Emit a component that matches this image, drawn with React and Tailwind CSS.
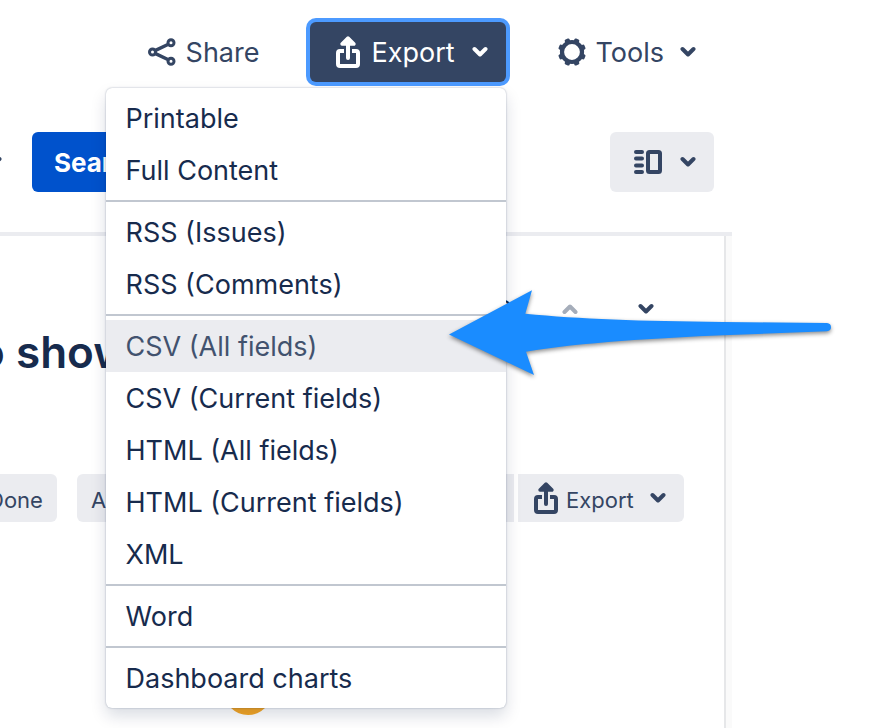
import React, { useState } from 'react';

const menuSections = [
  ['Printable', 'Full Content'],
  ['RSS (Issues)', 'RSS (Comments)'],
  ['CSV (All fields)', 'CSV (Current fields)', 'HTML (All fields)', 'HTML (Current fields)', 'XML'],
  ['Word'],
  ['Dashboard charts'],
];

const Chevron = ({ up = false }) => (
  <svg width="16" height="12" viewBox="0 0 16 12" fill="none" stroke="currentColor" strokeWidth="4" strokeLinecap="round" strokeLinejoin="round" className="shrink-0" aria-hidden="true">
    <path d={up ? 'M2.5 9 8 3.5 13.5 9' : 'M2.5 3 8 8.5 13.5 3'} />
  </svg>
);

const ShareIcon = () => (
  <svg width="28" height="28" viewBox="0 0 28 28" fill="none" stroke="currentColor" strokeWidth="3" className="shrink-0" aria-hidden="true">
    <circle cx="4.5" cy="14" r="3" />
    <circle cx="23" cy="4.8" r="3" />
    <circle cx="23" cy="23.2" r="3" />
    <path d="M7 12.6 20.4 6.2M7 15.4l13.4 6.4" strokeWidth="3.4" />
  </svg>
);

const ExportIcon = () => (
  <svg width="28" height="36" viewBox="0 0 28 36" fill="none" stroke="currentColor" strokeWidth="4" className="shrink-0" aria-hidden="true">
    <path d="M10 17H6a2 2 0 0 0-2 2v11a2 2 0 0 0 2 2h16a2 2 0 0 0 2-2V19a2 2 0 0 0-2-2h-4" />
    <path d="M14 6v18" strokeLinecap="round" />
    <path d="M8 10 14 4l6 6Z" fill="currentColor" strokeWidth="3.4" strokeLinecap="round" strokeLinejoin="round" />
  </svg>
);

const GearIcon = () => (
  <svg width="28" height="28" viewBox="0 0 28 28" className="shrink-0" aria-hidden="true">
    <circle cx="14" cy="14" r="10" fill="none" stroke="currentColor" strokeWidth="4.2" />
    {[22.5, 67.5, 112.5, 157.5, 202.5, 247.5, 292.5, 337.5].map(angle => (
      <rect key={angle} x="11.4" y="0" width="5.2" height="5" rx="1.4" fill="currentColor" transform={`rotate(${angle} 14 14)`} />
    ))}
  </svg>
);

const DetailViewIcon = () => (
  <svg width="28" height="24" viewBox="0 0 28 24" fill="none" stroke="currentColor" className="shrink-0" aria-hidden="true">
    <path d="M2 2H8M2 8.5H8M2 15.5H8M2 22H8" strokeWidth="4" strokeLinecap="round" />
    <rect x="14" y="2" width="12" height="20" rx="1.5" strokeWidth="4" />
  </svg>
);

const Arrow = () => (
  <svg width="400" height="100" viewBox="0 0 400 100" className="pointer-events-none absolute left-[440px] top-[280px] z-20 drop-shadow-[0_2px_2px_rgba(0,0,0,0.45)]" aria-hidden="true">
    <path
      d="M9 54.5 92 10.3 85.3 33.7C140 39 200 41 283 42L387 43Q391 43.5 391 47.3 391 51 387 51.2L283 55.3C220 58 140 62.5 86 71.7L94 95Z"
      fill="#1a8cff"
    />
  </svg>
);

const ExportMenu = () => {
  const [active, setActive] = useState('CSV (All fields)');

  return (
    <div role="menu" className="absolute right-0 top-full z-10 mt-1.5 w-[400px] overflow-hidden rounded-md bg-white shadow-[0_0_2px_rgba(9,30,66,0.35),0_8px_16px_rgba(9,30,66,0.15)]">
      {menuSections.map(section => (
        <div key={section[0]} className="border-t-2 border-[#c1c7d0] py-1 first:border-t-0">
          {section.map(item => (
            <button
              key={item}
              type="button"
              role="menuitem"
              onMouseEnter={() => setActive(item)}
              className={`block h-[52px] w-full px-5 pt-0.5 text-left text-[27px] ${
                active === item ? 'bg-[#ebecf0] text-[#42526e]' : 'text-[#172b4d]'
              }`}
            >
              {item}
            </button>
          ))}
        </div>
      ))}
    </div>
  );
};

const App = () => {
  const [open, setOpen] = useState(true);

  return (
    <div className="relative min-h-screen overflow-hidden bg-white pr-[140px] font-['Inter','Liberation_Sans',sans-serif] text-[#344563]">
      <header className="flex justify-end pr-4 pt-[22px] text-[27px]">
        <button type="button" className="flex h-[60px] items-center gap-2.5 px-5">
          <ShareIcon />
          <span className="pt-0.5">Share</span>
        </button>
        <div className="relative ml-[30px]">
          <button
            type="button"
            aria-haspopup="menu"
            aria-expanded={open}
            onClick={() => setOpen(!open)}
            className="flex h-[60px] w-[196px] items-center rounded-md bg-[#344563] pl-6 pr-[18px] text-white ring-4 ring-[#4c9aff]"
          >
            <ExportIcon />
            <span className="ml-2.5 mr-auto pt-0.5">Export</span>
            <Chevron />
          </button>
          {open && <ExportMenu />}
        </div>
        <button type="button" className="ml-8 flex h-[60px] items-center px-5">
          <GearIcon />
          <span className="ml-2.5 mr-4 pt-0.5">Tools</span>
          <Chevron />
        </button>
      </header>

      <div className="mt-[50px] flex items-center pr-[18px]">
        <button type="button" aria-label="More criteria" className="-ml-3.5 mr-[30px]">
          <Chevron />
        </button>
        <button type="button" className="h-[60px] rounded-md bg-[#0052cc] px-[22px] text-[26px] font-bold text-white">
          Search
        </button>
        <button type="button" aria-label="Detail view" className="ml-auto flex h-[60px] items-center gap-[18px] rounded-md bg-[#ebecf0] pl-6 pr-[18px]">
          <DetailViewIcon />
          <Chevron />
        </button>
      </div>

      <main className="mt-10 border-t-4 border-[#ebecf0]">
        <div className="flex">
          <section className="min-h-[500px] grow border-r-2 border-[#e6e7e9] pr-10 pt-[58px]">
            <div className="flex h-[30px] items-center justify-end pr-[30px]">
              <span className="text-[26px] text-[#172b4d]">1 of 2</span>
              <button type="button" aria-label="Previous issue" className="ml-[50px] text-[#a5adba]">
                <Chevron up />
              </button>
              <button type="button" aria-label="Next issue" className="ml-[60px]">
                <Chevron />
              </button>
            </div>
            <h1 className="-ml-[37px] text-[44px] font-semibold leading-[56px] text-[#172b4d]">to show</h1>
            <div className="mt-[94px] flex text-[22px]">
              <button type="button" className="-ml-[26px] h-12 rounded-md bg-[#ebecf0] px-3.5 pt-1">Done</button>
              <button type="button" className="ml-5 h-12 rounded-md bg-[#ebecf0] px-3.5 pt-1">Admin</button>
              <button type="button" aria-label="Share issue" className="ml-auto h-12 rounded-l-md bg-[#ebecf0] px-3.5">
                <ShareIcon />
              </button>
              <button type="button" className="ml-1 flex h-12 w-[166px] items-center rounded-r-md bg-[#ebecf0] pl-3.5 pr-[18px]">
                <ExportIcon />
                <span className="ml-1.5 mr-auto pt-1">Export</span>
                <Chevron />
              </button>
            </div>
            <div className="ml-56 mt-[145px] size-12 rounded-full bg-[#f5a623]" />
          </section>
          <div className="w-1.5 bg-[#fafafa]" />
        </div>
      </main>

      <Arrow />
    </div>
  );
};

export default App;
